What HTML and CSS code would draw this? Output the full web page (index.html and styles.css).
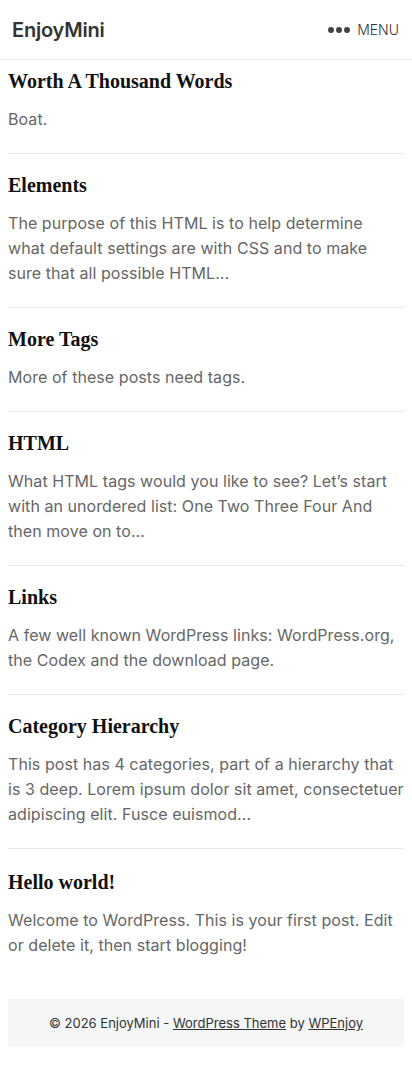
FILE: index.html
```html
<!DOCTYPE html>
<html lang="en">
<head>
    <meta charset="UTF-8">
    <meta name="viewport" content="width=device-width, initial-scale=1.0">
    <title>EnjoyMini</title>
    <link rel="stylesheet" href="styles.css">
</head>
<body>
    <header class="site-header">
        <a class="logo" href="#">EnjoyMini</a>
        <a class="menu-toggle" href="#">
            <span class="dots"><i></i><i></i><i></i></span>
            MENU
        </a>
    </header>

    <main class="posts">
        <article class="post">
            <h2>Worth A Thousand Words</h2>
            <p>Boat.</p>
        </article>
        <article class="post">
            <h2>Elements</h2>
            <p>The purpose of this HTML is to help determine what default settings are with CSS and to make sure that all possible HTML...</p>
        </article>
        <article class="post">
            <h2>More Tags</h2>
            <p>More of these posts need tags.</p>
        </article>
        <article class="post">
            <h2>HTML</h2>
            <p>What HTML tags would you like to see? Let’s start with an unordered list: One Two Three Four And then move on to...</p>
        </article>
        <article class="post">
            <h2>Links</h2>
            <p>A few well known WordPress links: WordPress.org, the Codex and the download page.</p>
        </article>
        <article class="post">
            <h2>Category Hierarchy</h2>
            <p>This post has 4 categories, part of a hierarchy that is 3 deep. Lorem ipsum dolor sit amet, consectetuer adipiscing elit. Fusce euismod...</p>
        </article>
        <article class="post">
            <h2>Hello world!</h2>
            <p>Welcome to WordPress. This is your first post. Edit or delete it, then start blogging!</p>
        </article>
    </main>

    <footer class="site-footer">
        © 2026 EnjoyMini - <a href="#">WordPress Theme</a> by <a href="#">WPEnjoy</a>
    </footer>
</body>
</html>
```

FILE: styles.css
```css
body {
    margin: 0;
    font-family: Inter, "Noto Sans", sans-serif;
    color: #666;
    background: #fff;
}

a {
    color: inherit;
    text-decoration: none;
}

.site-header {
    display: flex;
    justify-content: space-between;
    align-items: center;
    height: 59px;
    padding: 0 13px 0 12px;
    border-bottom: 1px solid #e8e8e8;
}

.logo {
    font-size: 20px;
    font-weight: 600;
    letter-spacing: -0.2px;
    color: #333;
}

.menu-toggle {
    display: flex;
    align-items: center;
    gap: 7px;
    font-size: 14px;
    font-weight: 300;
    color: #333;
}

.dots {
    display: flex;
    gap: 2px;
}

.dots i {
    width: 6px;
    height: 6px;
    border-radius: 50%;
    background: #444;
}

.posts {
    padding: 0 8px;
}

.post {
    padding: 17px 0 21px;
    border-bottom: 1px solid #e8e8e8;
}

.post:first-child {
    padding-top: 7px;
}

.post:last-child {
    padding-top: 19px;
    border-bottom: none;
}

.post h2 {
    margin: 0 0 12px;
    font-family: "Liberation Serif", serif;
    font-size: 20px;
    line-height: 28px;
    font-weight: bold;
    color: #111;
}

.post p {
    margin: 0;
    font-size: 16px;
    line-height: 25px;
    letter-spacing: 0.06px;
}

.site-footer {
    margin: 20px 8px 20px;
    padding: 0 10px;
    height: 48px;
    line-height: 48px;
    background: #f4f6f7;
    text-align: center;
    font-size: 13px;
    color: #333;
}

.site-footer a {
    text-decoration: underline;
}
```
